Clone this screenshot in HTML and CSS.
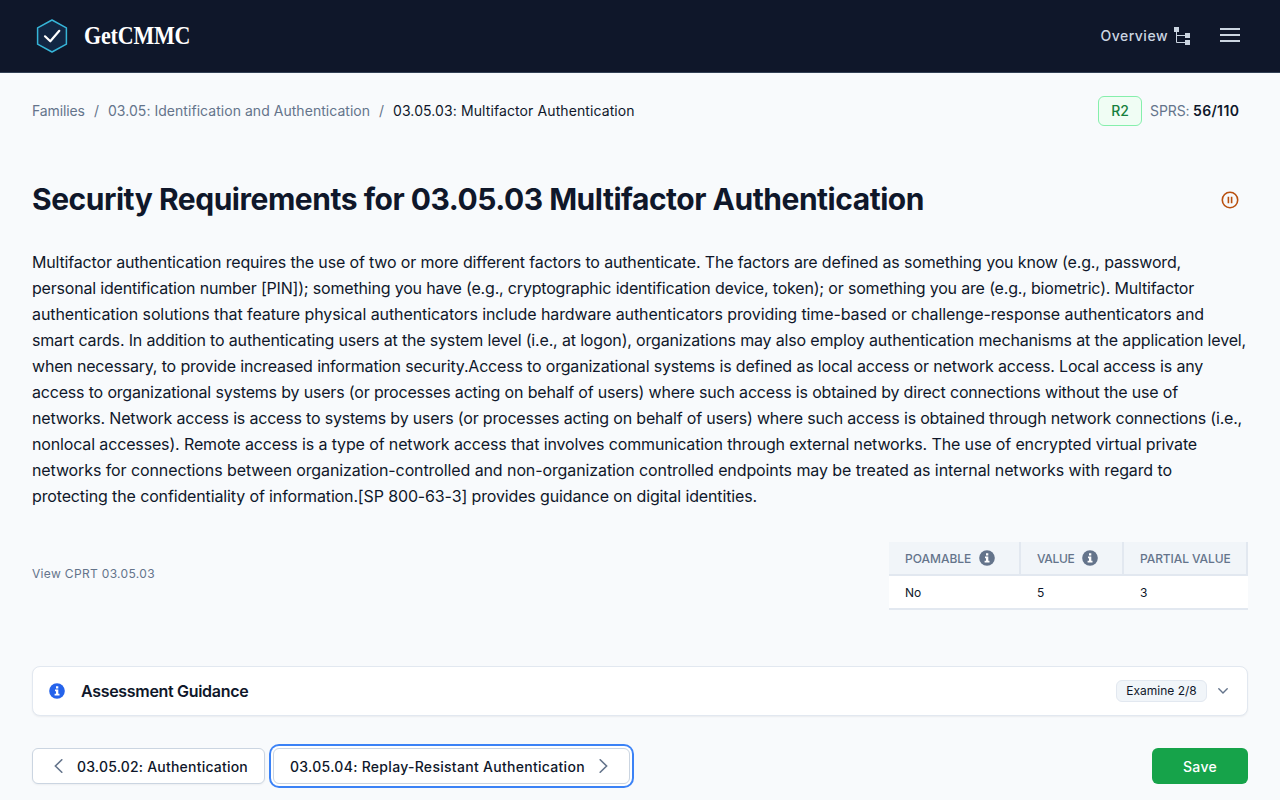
FILE: index.html
```html
<!DOCTYPE html>
<html lang="en">
<head>
<meta charset="utf-8">
<title>GetCMMC</title>
<link rel="stylesheet" href="styles.css">
</head>
<body>
<header class="topbar">
  <a class="brand">
    <svg width="40" height="40" viewBox="0 0 40 40" fill="none"><path d="M20 4 34.4 11.8V28.2L20 36 5.6 28.2V11.8Z" fill="#122643" stroke="#36b5d8" stroke-width="1.5" stroke-linejoin="round"/><path d="M13 20.3 18.3 25.3 27.3 14.8" stroke="#fff" stroke-width="2.2" stroke-linecap="round" stroke-linejoin="round"/></svg>
    <span class="brand-name">GetCMMC</span>
  </a>
  <nav class="topnav">
    <a class="overview"><span class="t-overview">Overview</span>
      <svg width="18" height="20" viewBox="0 0 18 20"><path d="M3.5 5V16.5H12M3.5 9.5H12" fill="none" stroke="#cbd5e1" stroke-width="1"/><path d="M1 1h5v5H1zM12 7h5v5h-5zM12 14h5v5h-5z" fill="#cbd5e1"/></svg>
    </a>
    <svg class="menu" width="20" height="14" viewBox="0 0 20 14"><path d="M0 0h20v2H0zM0 6h20v2H0zM0 12h20v2H0z" fill="#cbd5e1"/></svg>
  </nav>
</header>
<main class="page">
  <div class="crumb-row">
    <nav class="crumbs"><span class="c1">Families</span><i>/</i><span class="c2">03.05: Identification and Authentication</span><i>/</i><span class="c3">03.05.03: Multifactor Authentication</span></nav>
    <div class="status"><span class="revision">R2</span><span class="sprs">SPRS:</span><b class="score">56/110</b></div>
  </div>
  <div class="title-row">
    <h1>Security Requirements for 03.05.03 Multifactor Authentication</h1>
    <svg width="20" height="20" viewBox="0 0 20 20" fill="none" stroke="#b9500f"><circle cx="10" cy="10" r="7.7" stroke-width="1.6"/><path d="M8.4 6.8v6.4M11.6 6.8v6.4" stroke-width="1.6"/></svg>
  </div>
  <p class="description">
    <span class="l1">Multifactor authentication requires the use of two or more different factors to authenticate. The factors are defined as something you know (e.g., password,</span>
    <span class="l2">personal identification number [PIN]); something you have (e.g., cryptographic identification device, token); or something you are (e.g., biometric). Multifactor</span>
    <span class="l3">authentication solutions that feature physical authenticators include hardware authenticators providing time-based or challenge-response authenticators and</span>
    <span class="l4">smart cards. In addition to authenticating users at the system level (i.e., at logon), organizations may also employ authentication mechanisms at the application level,</span>
    <span class="l5">when necessary, to provide increased information security.Access to organizational systems is defined as local access or network access. Local access is any</span>
    <span class="l6">access to organizational systems by users (or processes acting on behalf of users) where such access is obtained by direct connections without the use of</span>
    <span class="l7">networks. Network access is access to systems by users (or processes acting on behalf of users) where such access is obtained through network connections (i.e.,</span>
    <span class="l8">nonlocal accesses). Remote access is a type of network access that involves communication through external networks. The use of encrypted virtual private</span>
    <span class="l9">networks for connections between organization-controlled and non-organization controlled endpoints may be treated as internal networks with regard to</span>
    <span class="l10">protecting the confidentiality of information.[SP 800-63-3] provides guidance on digital identities.</span>
  </p>
  <div class="meta-row">
    <a class="cprt">View CPRT 03.05.03</a>
    <table class="values">
      <thead><tr>
        <th class="col-poam"><div><span class="t-poam">POAMABLE</span><svg class="info" viewBox="0 0 16 16"><circle cx="8" cy="8" r="7.8" fill="currentColor"/><path d="M7 3.2h2.3v2.2H7zM6 6.6h3.3v4.1h1.2v1.7H5.6v-1.7H7V8.2H6z" fill="#fff"/></svg></div></th>
        <th class="col-value"><div><span class="t-value">VALUE</span><svg class="info" viewBox="0 0 16 16"><circle cx="8" cy="8" r="7.8" fill="currentColor"/><path d="M7 3.2h2.3v2.2H7zM6 6.6h3.3v4.1h1.2v1.7H5.6v-1.7H7V8.2H6z" fill="#fff"/></svg></div></th>
        <th class="col-partial"><div><span class="t-partial">PARTIAL VALUE</span></div></th>
      </tr></thead>
      <tbody><tr><td>No</td><td>5</td><td>3</td></tr></tbody>
    </table>
  </div>
  <section class="guidance">
    <svg class="info info-blue" viewBox="0 0 16 16"><circle cx="8" cy="8" r="7.8" fill="currentColor"/><path d="M7 3.2h2.3v2.2H7zM6 6.6h3.3v4.1h1.2v1.7H5.6v-1.7H7V8.2H6z" fill="#fff"/></svg>
    <h2>Assessment Guidance</h2>
    <span class="pill">Examine 2/8</span>
    <svg class="chevron" width="10" height="6" viewBox="0 0 10 6"><path d="M.8.8 5 5 9.2.8" fill="none" stroke="#64748b" stroke-width="1.4" stroke-linecap="round"/></svg>
  </section>
  <footer class="actions">
    <a class="btn prev"><svg width="9" height="14" viewBox="0 0 9 14"><path d="M7.8.8 1.4 7l6.4 6.2" fill="none" stroke="#64748b" stroke-width="1.6" stroke-linecap="round"/></svg><span class="t-prev">03.05.02: Authentication</span></a>
    <a class="btn next"><span class="t-next">03.05.04: Replay-Resistant Authentication</span><svg width="9" height="14" viewBox="0 0 9 14"><path d="M1.2.8 7.6 7l-6.4 6.2" fill="none" stroke="#64748b" stroke-width="1.6" stroke-linecap="round"/></svg></a>
    <button class="save">Save</button>
  </footer>
</main>
</body>
</html>
```

FILE: styles.css
```css
* { box-sizing: border-box; }
body { margin: 0; height: 800px; overflow: hidden; background: #f8fafc; color: #0f172a; font-family: Inter, "Liberation Sans", sans-serif; font-size: 14px; }
svg { display: block; flex: none; }
span { white-space: nowrap; }
.topbar { height: 73px; background: #0f172a; border-bottom: 1px solid #334155; padding: 0 40px 0 32px; display: flex; align-items: center; justify-content: space-between; }
.brand { display: flex; align-items: center; gap: 12px; }
.brand-name { font: bold 25px/32px "Liberation Serif", serif; letter-spacing: -.2px; color: #fff; transform: scaleX(.88); transform-origin: left; }
.topnav { display: flex; align-items: center; }
.overview { display: flex; align-items: center; gap: 5px; color: #cbd5e1; line-height: 20px; font-weight: 450; }
.t-overview { letter-spacing: .5px; }
.menu { margin: 0 0 2px 29px; }
.page { padding: 0 32px; }
.crumb-row { display: flex; align-items: center; justify-content: space-between; margin-top: 23px; height: 30px; padding-right: 9px; }
.crumbs { display: flex; color: #64748b; line-height: 20px; }
.crumbs i { font-style: normal; width: 23px; text-align: center; }
.c1 { width: 53px; letter-spacing: -.13px; }
.c2 { width: 262px; letter-spacing: .04px; }
.c3 { color: #0f172a; letter-spacing: .1px; }
.status { display: flex; align-items: center; }
.revision { width: 44px; height: 30px; border: 1px solid #86efac; border-radius: 6px; background: #f0fdf4; color: #15803d; font-weight: 500; line-height: 28px; text-align: center; margin-right: 8px; }
.sprs { color: #64748b; width: 43px; line-height: 20px; letter-spacing: -.1px; }
.score { width: 46px; font-weight: 600; line-height: 20px; letter-spacing: .35px; }
.title-row { display: flex; align-items: center; justify-content: space-between; height: 36px; margin-top: 56px; padding-right: 8px; }
h1 { margin: 0 0 2px; font-size: 30px; line-height: 36px; font-weight: 700; letter-spacing: -.475px; white-space: nowrap; }
.description { margin: 31px 0 0; font-size: 16px; line-height: 26px; }
.description span { display: block; text-align-last: justify; }
.l1 { width: 1149px; letter-spacing: -.17px; }
.l2 { width: 1162px; letter-spacing: -.2px; }
.l3 { width: 1172px; letter-spacing: -.1px; }
.l4 { width: 1214px; letter-spacing: -.17px; }
.l5 { width: 1171px; letter-spacing: -.2px; }
.l6 { width: 1146px; letter-spacing: -.19px; }
.l7 { width: 1210px; letter-spacing: -.2px; }
.l8 { width: 1165px; letter-spacing: -.15px; }
.l9 { width: 1140px; letter-spacing: -.11px; }
.l10 { width: 725px; letter-spacing: -.14px; }
.meta-row { display: flex; justify-content: space-between; align-items: center; margin-top: 33px; height: 68px; }
.cprt { font-size: 12px; color: #64748b; margin-bottom: 5px; letter-spacing: .33px; }
.values { border-collapse: separate; border-spacing: 0; table-layout: fixed; width: 359px; font-size: 12px; }
.values th { height: 34px; padding: 0 0 0 16px; background: #f1f5f9; border-right: 2px solid #e2e8f0; border-bottom: 2px solid #e2e8f0; font-weight: 500; color: #64748b; text-align: left; }
.values th div { display: flex; align-items: center; gap: 8px; }
.values td { height: 34px; padding: 0 0 0 16px; background: #fff; border-bottom: 2px solid #e2e8f0; }
.t-value { width: 37px; letter-spacing: -.3px; }
.t-partial { letter-spacing: -.08px; }
.col-poam { width: 132px; }
.col-value { width: 103px; }
.info { width: 16px; height: 16px; }
.info-blue { color: #2563eb; }
.guidance { margin-top: 56px; height: 50px; display: flex; align-items: center; padding: 0 19px 0 16px; background: #fff; border: 1px solid #e2e8f0; border-radius: 8px; box-shadow: 0 1px 2px rgba(15,23,42,.06); }
h2 { margin: 0 auto 0 16px; font-size: 16px; line-height: 24px; font-weight: 600; letter-spacing: -.31px; white-space: nowrap; }
.pill { width: 91px; height: 22px; border: 1px solid #e2e8f0; border-radius: 6px; background: #f1f5f9; font-size: 12px; line-height: 20px; text-align: center; }
.chevron { margin-left: 11px; }
.actions { display: flex; margin-top: 32px; height: 36px; gap: 8px; }
.btn { display: flex; align-items: center; justify-content: space-between; height: 36px; background: #fff; border: 1px solid #cbd5e1; border-radius: 6px; font-weight: 500; }
.t-prev { letter-spacing: .21px; }
.t-next { letter-spacing: .29px; }
.prev { width: 233px; padding: 0 16px 0 21px; box-shadow: 0 1px 2px rgba(15,23,42,.05); }
.next { width: 357px; padding: 0 21px 0 16px; box-shadow: 0 0 0 2px #fff, 0 0 0 4px #3b82f6; }
.save { margin-left: auto; width: 96px; height: 36px; border: 0; border-radius: 6px; background: #16a34a; color: #fff; font: 500 14px Inter, sans-serif; letter-spacing: .3px; }
```
